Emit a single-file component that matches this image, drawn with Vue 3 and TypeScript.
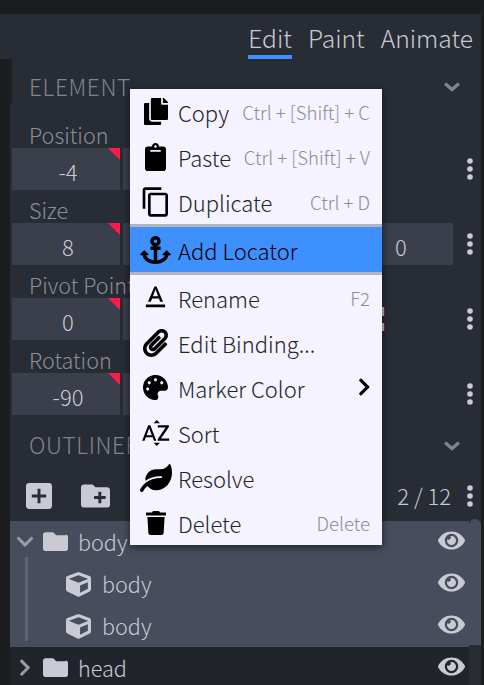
<script setup lang="ts">
interface Row { label: string; values: string[]; marks?: boolean }
const rows: Row[] = [
  { label: 'Position', values: ['-4', '', ''] },
  { label: 'Size', values: ['8', '', '', '0'] },
  { label: 'Pivot Point', values: ['0', '', ''], marks: true },
  { label: 'Rotation', values: ['-90', '', ''] },
]
const I = {
  copy: 'M320 448v40c0 13.255-10.745 24-24 24H24c-13.255 0-24-10.745-24-24V120c0-13.255 10.745-24 24-24h72v296c0 30.879 25.121 56 56 56h168zm0-344V0H152c-13.255 0-24 10.745-24 24v368c0 13.255 10.745 24 24 24h272c13.255 0 24-10.745 24-24V128H344c-13.2 0-24-10.8-24-24zm120.971-31.029L375.029 7.029A24 24 0 0 0 358.059 0H352v96h96v-6.059a24 24 0 0 0-7.029-16.97z',
  clip: 'M384 112v352c0 26.51-21.49 48-48 48H48c-26.51 0-48-21.49-48-48V112c0-26.51 21.49-48 48-48h80c0-35.29 28.71-64 64-64s64 28.71 64 64h80c26.51 0 48 21.49 48 48zM192 40c-13.255 0-24 10.745-24 24s10.745 24 24 24 24-10.745 24-24-10.745-24-24-24m96 114v-20a6 6 0 0 0-6-6H102a6 6 0 0 0-6 6v20a6 6 0 0 0 6 6h180a6 6 0 0 0 6-6z',
  dup: 'M16 1H4c-1.1 0-2 .9-2 2v14h2V3h12V1zm3 4H8c-1.1 0-2 .9-2 2v14c0 1.1.9 2 2 2h11c1.1 0 2-.9 2-2V7c0-1.1-.9-2-2-2zm0 16H8V7h11v14z',
  anchor: 'M12.971 352h32.394C67.172 454.735 181.944 512 288 512c106.229 0 220.853-57.38 242.635-160h32.394c10.691 0 16.045-12.926 8.485-20.485l-67.029-67.029c-4.686-4.686-12.284-4.686-16.971 0l-67.029 67.029c-7.56 7.56-2.206 20.485 8.485 20.485h35.146c-20.29 54.317-84.963 86.588-144.117 94.015V256h52c6.627 0 12-5.373 12-12v-40c0-6.627-5.373-12-12-12h-52v-5.47c37.281-13.178 63.995-48.725 64-90.518C384.005 43.772 341.605.738 289.37.01 235.723-.739 192 42.525 192 96c0 41.798 26.716 77.35 64 90.53V192h-52c-6.627 0-12 5.373-12 12v40c0 6.627 5.373 12 12 12h52v190.015c-58.936-7.399-123.82-39.679-144.117-94.015h35.146c10.691 0 16.045-12.926 8.485-20.485l-67.029-67.029c-4.686-4.686-12.284-4.686-16.971 0L4.485 331.515C-3.074 339.074 2.28 352 12.971 352zM288 64c17.645 0 32 14.355 32 32s-14.355 32-32 32-32-14.355-32-32 14.355-32 32-32z',
  rename: 'M5 17v2h14v-2H5zm4.5-4.2h5l.9 2.2h2.1L12.75 4h-1.5L6.5 15h2.1l.9-2.2zM12 5.98L13.87 11h-3.74L12 5.98z',
  clipr: 'M43.246 466.142c-58.43-60.289-57.341-157.511 1.386-217.581L254.392 34c44.316-45.332 116.351-45.336 160.671 0 43.89 44.894 43.943 117.329 0 162.276L232.214 383.128c-29.855 30.537-78.633 30.111-107.982-.998-28.275-29.97-27.368-77.473 1.452-106.953l143.743-146.835c6.182-6.314 16.312-6.422 22.626-.241l22.861 22.379c6.315 6.182 6.422 16.312.241 22.626L171.427 319.927c-4.932 5.045-5.236 13.428-.648 18.292 4.372 4.634 11.245 4.711 15.688.165l182.849-186.851c19.613-20.065 19.613-52.296-.011-72.373-19.189-19.627-49.957-19.637-69.154 0L90.39 293.295c-34.763 35.56-35.299 93.12-1.191 128.313 34.01 35.093 88.985 35.137 123.058.286l172.06-175.999c6.177-6.319 16.307-6.433 22.626-.256l22.877 22.364c6.319 6.177 6.434 16.307.256 22.626l-172.06 175.998c-59.576 60.938-155.943 60.216-214.77-.485z',
  palette: 'M204.3 5C104.9 24.4 24.8 104.3 5.2 203.4c-37 187 131.7 326.4 258.8 306.7 41.2-6.4 61.4-54.6 42.5-91.7-23.1-45.4 9.9-98.4 60.9-98.4h79.7c35.8 0 64.8-29.6 64.9-65.3C511.5 97.1 368.1-26.9 204.3 5zM96 320c-17.7 0-32-14.3-32-32s14.3-32 32-32 32 14.3 32 32-14.3 32-32 32zm32-128c-17.7 0-32-14.3-32-32s14.3-32 32-32 32 14.3 32 32-14.3 32-32 32zm128-64c-17.7 0-32-14.3-32-32s14.3-32 32-32 32 14.3 32 32-14.3 32-32 32zm128 64c-17.7 0-32-14.3-32-32s14.3-32 32-32 32 14.3 32 32-14.3 32-32 32z',
  sort: 'M14.94 4.66h-4.72l2.36-2.36zm-4.69 14.71h4.66l-2.33 2.33zM6.1 6.27L1.6 17.73h1.84l.92-2.45h5.11l.92 2.45h1.84L7.74 6.27H6.1zm-1.13 7.37l1.94-5.18 1.94 5.18H4.97zm10.76 2.5h6.12v1.59h-8.53v-1.29l5.92-8.56h-5.88v-1.6h8.3v1.26l-5.93 8.6z',
  leaf: 'M546.2 9.7c-5.6-12.5-21.6-13-28.3-1.2C486.9 62.4 431.4 96 368 96h-80C182 96 96 182 96 288c0 7 .8 13.7 1.5 20.5C161.3 262.8 253.4 224 384 224c8.8 0 16 7.2 16 16s-7.2 16-16 16C132.6 256 26 410.1 2.4 468c-6.6 16.3 1.2 34.9 17.5 41.6 16.4 6.8 35-1.1 41.8-17.3 1.5-3.6 20.9-47.9 71.9-90.6 32.4 43.9 94 85.8 174.9 77.2C465.5 467.5 576 326.7 576 154.3c0-50.2-10.8-102.2-29.8-144.6z',
  trash: 'M432 32H312l-9.4-18.7A24 24 0 0 0 281.1 0H166.8a23.72 23.72 0 0 0-21.4 13.3L136 32H16A16 16 0 0 0 0 48v32a16 16 0 0 0 16 16h416a16 16 0 0 0 16-16V48a16 16 0 0 0-16-16zM53.2 467a48 48 0 0 0 47.9 45h245.8a48 48 0 0 0 47.9-45L416 128H32z',
  chevR: 'M285.476 272.971L91.132 467.314c-9.373 9.373-24.569 9.373-33.941 0l-22.667-22.667c-9.357-9.357-9.375-24.522-.04-33.901L188.505 256 34.484 101.255c-9.335-9.379-9.317-24.544.04-33.901l22.667-22.667c9.373-9.373 24.569-9.373 33.941 0L285.475 239.03c9.373 9.372 9.373 24.568.001 33.941z',
  eye: 'M572.52 241.4C518.29 135.59 410.93 64 288 64S57.68 135.64 3.48 241.41a32.4 32.4 0 0 0 0 29.2C57.71 376.41 165.07 448 288 448s230.32-71.64 284.52-177.41a32.4 32.4 0 0 0 0-29.19zM288 400a144 144 0 1 1 144-144 143.93 143.93 0 0 1-144 144zm0-240a95.31 95.31 0 0 0-25.31 3.79 47.85 47.85 0 0 1-66.9 66.9A95.78 95.78 0 1 0 288 160z',
  folder: 'M464 128H272l-64-64H48C21.49 64 0 85.49 0 112v288c0 26.51 21.49 48 48 48h416c26.51 0 48-21.49 48-48V160c0-26.51-21.49-48-48-48z',
  cube: 'M239.1 6.3l-208 78c-18.7 7-31.1 25-31.1 45v225.1c0 18.2 10.3 34.8 26.5 42.9l208 104c13.5 6.8 29.4 6.8 42.9 0l208-104c16.3-8.1 26.5-24.8 26.5-42.9V129.3c0-20-12.4-37.9-31.1-44.9l-208-78C262 2.2 250 2.2 239.1 6.3zM256 68.4l192 72v1.1l-192 78-192-78v-1.1l192-72zm32 356V275.5l160-65v133.9l-160 80z',
  addBox: 'M19 3H5c-1.11 0-2 .9-2 2v14c0 1.1.89 2 2 2h14c1.1 0 2-.9 2-2V5c0-1.1-.9-2-2-2zm-2 10h-4v4h-2v-4H7v-2h4V7h2v4h4v2z',
  addFolder: 'M20 6h-8l-2-2H4c-1.11 0-1.99.89-1.99 2L2 18c0 1.11.89 2 2 2h16c1.11 0 2-.89 2-2V8c0-1.11-.89-2-2-2zm-1 8h-3v3h-2v-3h-3v-2h3V9h2v3h3v2z',
}
interface Item { label: string; key?: string; vb: string; d: string; w: number; h: number; active?: boolean; sub?: boolean }
const items: Item[] = [
  { label: 'Copy', key: 'Ctrl + [Shift] + C', vb: '0 0 448 512', d: I.copy, w: 24, h: 27 },
  { label: 'Paste', key: 'Ctrl + [Shift] + V', vb: '0 0 384 512', d: I.clip, w: 21, h: 28 },
  { label: 'Duplicate', key: 'Ctrl + D', vb: '0 0 24 24', d: I.dup, w: 32, h: 32 },
  { label: 'Add Locator', vb: '0 0 576 512', d: I.anchor, w: 31, h: 28, active: true },
  { label: 'Rename', key: 'F2', vb: '0 0 24 24', d: I.rename, w: 33, h: 33 },
  { label: 'Edit Binding...', vb: '0 0 448 512', d: I.clipr, w: 25, h: 28 },
  { label: 'Marker Color', vb: '0 0 512 512', d: I.palette, w: 25, h: 25, sub: true },
  { label: 'Sort', vb: '0 0 24 24', d: I.sort, w: 32, h: 32 },
  { label: 'Resolve', vb: '0 0 576 512', d: I.leaf, w: 32, h: 28 },
  { label: 'Delete', key: 'Delete', vb: '0 0 448 512', d: I.trash, w: 20, h: 24 },
]
interface Node { name: string; kind: 'folder' | 'cube'; open?: boolean; chev?: boolean; child?: boolean; sel?: boolean }
const nodes: Node[] = [
  { name: 'body', kind: 'folder', open: true, chev: true, sel: true },
  { name: 'body', kind: 'cube', child: true, sel: true },
  { name: 'body', kind: 'cube', child: true, sel: true },
  { name: 'head', kind: 'folder', chev: true },
]
</script>

<template>
  <div class="app">
    <div class="topbar"></div>
    <div class="tabbar">
      <div class="tab on">Edit</div>
      <div class="tab">Paint</div>
      <div class="tab">Animate</div>
    </div>
    <div class="main">
      <div class="panel">
        <div class="head first">
          <span>ELEMENT</span>
          <svg class="fold" viewBox="0 0 18 10"><path d="M2 1.5l7 6 7-6" /></svg>
        </div>
        <div class="rows">
          <div v-for="r in rows" :key="r.label" class="row">
            <div class="lab">{{ r.label }}</div>
            <div class="line">
              <div v-for="(v, i) in r.values" :key="i" class="field">
                <span>{{ v }}</span>
                <i v-if="i < 3" class="flag"></i>
              </div>
              <svg v-if="r.marks" class="marks" viewBox="0 0 15 25"><rect x="0" y="0" width="14" height="9" fill="#bdb9bc" /><rect x="14" y="0" width="1" height="9" fill="#7d2a38" /><rect x="0" y="16" width="14" height="8" fill="#bdb9bc" /><rect x="14" y="16" width="1" height="8" fill="#7d2a38" /></svg>
              <svg class="dots" viewBox="0 0 6 22"><circle cx="3" cy="3" r="2.8" /><circle cx="3" cy="11" r="2.8" /><circle cx="3" cy="19" r="2.8" /></svg>
            </div>
          </div>
        </div>
        <div class="head second">
          <span>OUTLINER</span>
          <svg class="fold" viewBox="0 0 18 10"><path d="M2 1.5l7 6 7-6" /></svg>
        </div>
        <div class="tools">
          <svg class="tool t1" viewBox="3 3 18 18"><path :d="I.addBox" /></svg>
          <svg class="tool t2" viewBox="2 4 20 16"><path :d="I.addFolder" /></svg>
          <span class="count">2 / 12</span>
          <svg class="dots" viewBox="0 0 6 22"><circle cx="3" cy="3" r="2.8" /><circle cx="3" cy="11" r="2.8" /><circle cx="3" cy="19" r="2.8" /></svg>
        </div>
        <div class="tree">
          <div class="list">
            <div v-for="(n, i) in nodes" :key="i" class="node" :class="{ sel: n.sel, child: n.child }">
              <svg v-if="n.chev" class="chev" :class="{ open: n.open }" viewBox="0 0 320 512"><path :d="I.chevR" /></svg>
              <svg v-if="n.kind === 'folder'" class="folder" viewBox="0 64 512 384"><path :d="I.folder" /></svg>
              <svg v-else class="cube" viewBox="0 0 512 512"><path :d="I.cube" /></svg>
              <span class="name">{{ n.name }}</span>
              <svg class="eye" viewBox="0 64 576 384"><path :d="I.eye" /></svg>
            </div>
            <i class="guide"></i>
          </div>
          <div class="scroll"></div>
        </div>
      </div>
      <div class="rail"></div>
    </div>

    <div class="menu">
      <div v-for="m in items" :key="m.label" class="item" :class="{ active: m.active }">
        <span class="ico">
          <svg :viewBox="m.vb" preserveAspectRatio="none" :style="{ width: m.w + 'px', height: m.h + 'px' }"><path :d="m.d" /></svg>
        </span>
        <span class="txt">{{ m.label }}</span>
        <span v-if="m.key" class="key">{{ m.key }}</span>
        <svg v-if="m.sub" class="more" viewBox="0 0 320 512"><path :d="I.chevR" /></svg>
      </div>
    </div>
  </div>
</template>

<style>
html, body { margin: 0; background: #1b1d20; }
</style>

<style scoped>
.app {
  position: relative;
  width: 484px;
  height: 685px;
  overflow: hidden;
  display: flex;
  flex-direction: column;
  background: #1b1d20;
  color: #cacad4;
  font-family: "Noto Sans CJK SC", "Noto Sans", sans-serif;
  font-weight: 300;
}
.topbar { height: 14px; flex: none; }
.tabbar {
  height: 45px;
  flex: none;
  width: 481px;
  box-sizing: border-box;
  padding-right: 8px;
  background: #282c34;
  display: flex;
  justify-content: flex-end;
  gap: 16px;
}
.tab {
  height: 45px;
  box-sizing: border-box;
  font-size: 24.6px;
  line-height: 46px;
}
.tab.on { border-bottom: 4px solid #3e90ff; }
.main { flex: 1; display: flex; min-height: 0; padding-left: 10px; }
.panel { width: 471px; flex: none; display: flex; flex-direction: column; background: linear-gradient(#1b1d20 0 45px, #282c34 45px); }
.rail { flex: none; width: 3px; }
.head {
  display: flex;
  justify-content: space-between;
  align-items: center;
  padding: 0 20px 0 19px;
  color: #7f848e;
  font-size: 22.6px;
  letter-spacing: .6px;
  height: 48px;
  background: #282c34;
}
.head span { position: relative; top: -3px; }
.head.first { height: 45px; margin-left: 2px; padding-left: 17px; align-items: flex-end; line-height: 30px; }
.head.first span { top: -2px; }
.fold { width: 18px; height: 10px; fill: none; stroke: #7f848e; stroke-width: 3.4; position: relative; top: -1px; }
.head.first .fold { margin-bottom: 11px; }
.rows { padding-top: 19px; }
.row { height: 75px; padding-left: 2px; }
.lab { height: 25px; line-height: 23px; font-size: 21.6px; color: #8a8f99; padding-left: 17px; white-space: nowrap; }
.line { display: flex; gap: 3px; height: 42px; position: relative; }
.field {
  position: relative;
  width: 108px;
  height: 42px;
  box-sizing: border-box;
  padding: 4px 0 0 4px;
  background: #3a3f4b;
  display: flex;
  align-items: center;
  justify-content: center;
  font-size: 22px;
}
.flag {
  position: absolute;
  top: 0;
  right: 0;
  border-top: 12px solid #ff1a4a;
  border-left: 12px solid transparent;
}
.marks { position: absolute; left: 358px; top: 9px; width: 15px; height: 25px; }
.line .dots { position: absolute; left: 455px; top: 0; bottom: 0; margin: auto; }
.dots { width: 6px; height: 22px; fill: #cacad4; flex: none; }
.tools { height: 50px; display: flex; align-items: center; padding-left: 16px; padding-right: 8px; }
.tool { fill: #cacad4; flex: none; }
.t1 { width: 26px; height: 26px; }
.t2 { width: 29px; height: 24px; margin-left: 29px; }
.count { margin-left: auto; font-size: 22px; margin-right: 16px; position: relative; top: -1px; }
.tree { flex: 1; min-height: 0; display: flex; }
.list { width: 459px; flex: none; position: relative; }
.scroll { width: 12px; height: 126px; background: #474d5d; border-radius: 6px 6px 0 0; margin-top: -2px; }
.node { height: 42px; display: flex; align-items: center; background: #21252b; position: relative; font-size: 21.6px; }
.node.sel { background: #474d5d; }
.chev { position: absolute; left: 9px; top: 11px; width: 12px; height: 19.4px; fill: #9a9ca5; }
.chev.open { transform: rotate(90deg); }
.folder { position: absolute; left: 33px; top: 11px; width: 25px; height: 19px; fill: #cacad4; }
.cube { position: absolute; left: 56px; top: 9px; width: 25px; height: 25px; fill: #cacad4; }
.name { position: absolute; left: 68px; top: 6px; line-height: 30px; }
.child .name { left: 92px; }
.eye { position: absolute; left: 428px; top: 10px; width: 27px; height: 19px; fill: #cacad4; }
.guide { position: absolute; left: 15px; top: 36px; width: 3px; height: 84px; background: #5e6474; }
.menu {
  position: absolute;
  left: 130px;
  top: 89px;
  width: 252px;
  background: #f4f3ff;
  box-shadow: 0 2px 8px rgba(0, 0, 0, .6);
  color: #21252b;
  font-size: 22px;
}
.item { height: 45px; display: flex; align-items: center; position: relative; padding-right: 12px; }
.item.active { background: #3e90ff; color: #000; border-top: 3px solid #b5b5c0; border-bottom: 3px solid #b5b5c0; }
.ico { position: absolute; left: 0; top: 0; width: 51px; height: 45px; display: flex; align-items: center; justify-content: center; }
.ico svg { fill: #000; }
.txt { margin-left: 48px; flex: 1; position: relative; line-height: 30px; white-space: nowrap; }
.key { font-size: 18.6px; color: #8c8c98; white-space: nowrap; }
.more { width: 12.5px; height: 20px; fill: #000; position: relative; top: -1px; }
</style>
